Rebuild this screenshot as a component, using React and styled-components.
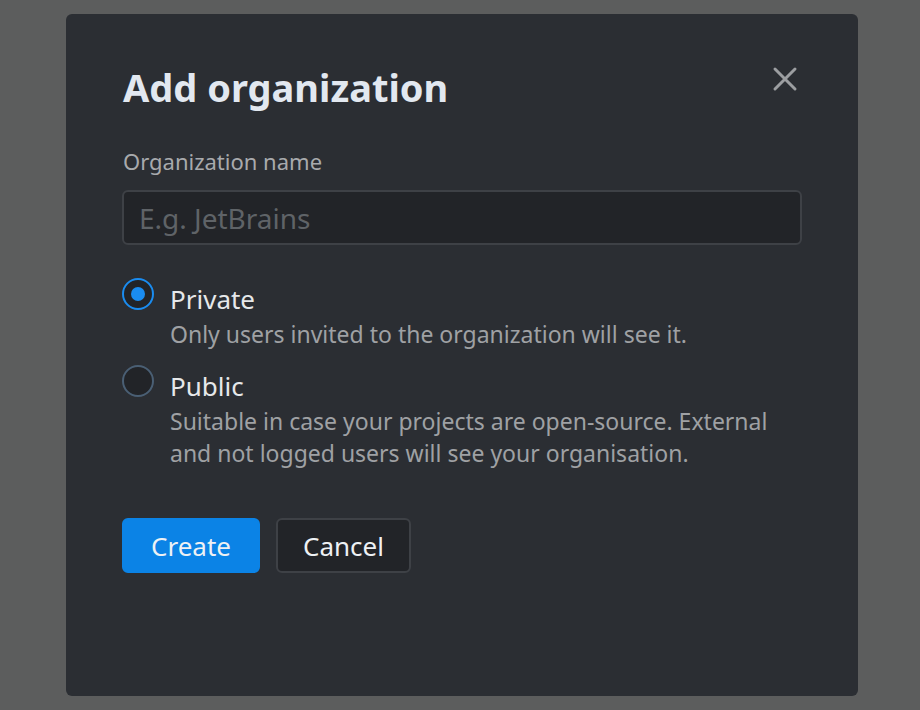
import React, { useState } from 'react'
import styled, { createGlobalStyle } from 'styled-components'

const Global = createGlobalStyle`
  html, body {
    margin: 0;
    padding: 0;
    background: #5c5d5d;
    font-family: "Noto Sans", "Open Sans", sans-serif;
  }
`

const Overlay = styled.div`
  width: 920px;
  height: 710px;
  box-sizing: border-box;
  padding: 14px 0 0 66px;
`

const Modal = styled.div`
  position: relative;
  width: 792px;
  height: 682px;
  background: #2b2e33;
  border-radius: 6px;
  box-sizing: border-box;
  padding: 61px 56px 0 57px;
`

const Title = styled.h1`
  margin: 0;
  font-size: 38px;
  font-weight: 700;
  color: #e2e8f0;
  line-height: 24px;
`

const Close = styled.button`
  position: absolute;
  top: 52px;
  right: 60px;
  width: 26px;
  height: 26px;
  padding: 0;
  background: none;
  border: none;
  color: #9c9ea1;
  display: flex;
  align-items: center;
  justify-content: center;
`

const Label = styled.label`
  display: block;
  margin-top: 49px;
  font-size: 22px;
  color: #a8aaad;
  line-height: 26px;
`

const Input = styled.input`
  display: block;
  margin: 16px 0 0 -1px;
  width: 680px;
  height: 55px;
  box-sizing: border-box;
  background: #222428;
  border: 2px solid #3e4146;
  border-radius: 6px;
  padding: 0 15px;
  font-family: inherit;
  font-size: 28px;
  color: #e6e8ea;
  outline: none;
  &::placeholder { color: #5f6367; }
`

const Options = styled.div`
  margin-top: 35px;
  display: flex;
  flex-direction: column;
  gap: 17px;
`

const Option = styled.div`
  display: flex;
  gap: 16px;
  margin-left: -1px;
  cursor: pointer;
`

const Radio = styled.span`
  flex: none;
  width: 32px;
  height: 32px;
  margin-top: -2px;
  box-sizing: border-box;
  border-radius: 50%;
  border: 2px solid ${p => (p.$checked ? '#1a8cf0' : '#4a5f74')};
  background: #222428;
  display: flex;
  align-items: center;
  justify-content: center;
  &::after {
    content: '';
    width: 14px;
    height: 14px;
    border-radius: 50%;
    background: #1a8cf0;
    display: ${p => (p.$checked ? 'block' : 'none')};
  }
`

const OptionText = styled.div`
  display: flex;
  flex-direction: column;
`

const OptionTitle = styled.span`
  font-size: 26px;
  line-height: 38px;
  color: #e6e8ea;
`

const OptionDesc = styled.span`
  font-size: 23px;
  line-height: 32px;
  color: #9fa1a4;
  max-width: 620px;
`

const Actions = styled.div`
  margin-top: 49px;
  margin-left: -1px;
  display: flex;
  gap: 16px;
`

const Button = styled.button`
  height: 55px;
  padding: 0 ${p => (p.$primary ? 27 : 25)}px;
  border-radius: 6px;
  font-family: inherit;
  font-size: 26px;
  cursor: pointer;
  color: #eef1f4;
  background: ${p => (p.$primary ? '#0b83e6' : '#222428')};
  border: 2px solid ${p => (p.$primary ? '#0b83e6' : '#3e4146')};
`

export default function App() {
  const [access, setAccess] = useState('private')
  return (
    <>
      <Global />
      <Overlay>
        <Modal>
          <Title>Add organization</Title>
          <Close aria-label="Close">
            <svg width="26" height="26" viewBox="0 0 26 26" fill="none" stroke="currentColor" strokeWidth="3" strokeLinecap="round">
              <path d="M3 3 L23 23 M23 3 L3 23" />
            </svg>
          </Close>
          <Label htmlFor="org-name">Organization name</Label>
          <Input id="org-name" placeholder="E.g. JetBrains" />
          <Options>
            <Option onClick={() => setAccess('private')}>
              <Radio $checked={access === 'private'} />
              <OptionText>
                <OptionTitle>Private</OptionTitle>
                <OptionDesc>Only users invited to the organization will see it.</OptionDesc>
              </OptionText>
            </Option>
            <Option onClick={() => setAccess('public')}>
              <Radio $checked={access === 'public'} />
              <OptionText>
                <OptionTitle>Public</OptionTitle>
                <OptionDesc>Suitable in case your projects are open-source. External and not logged users will see your organisation.</OptionDesc>
              </OptionText>
            </Option>
          </Options>
          <Actions>
            <Button $primary>Create</Button>
            <Button>Cancel</Button>
          </Actions>
        </Modal>
      </Overlay>
    </>
  )
}
